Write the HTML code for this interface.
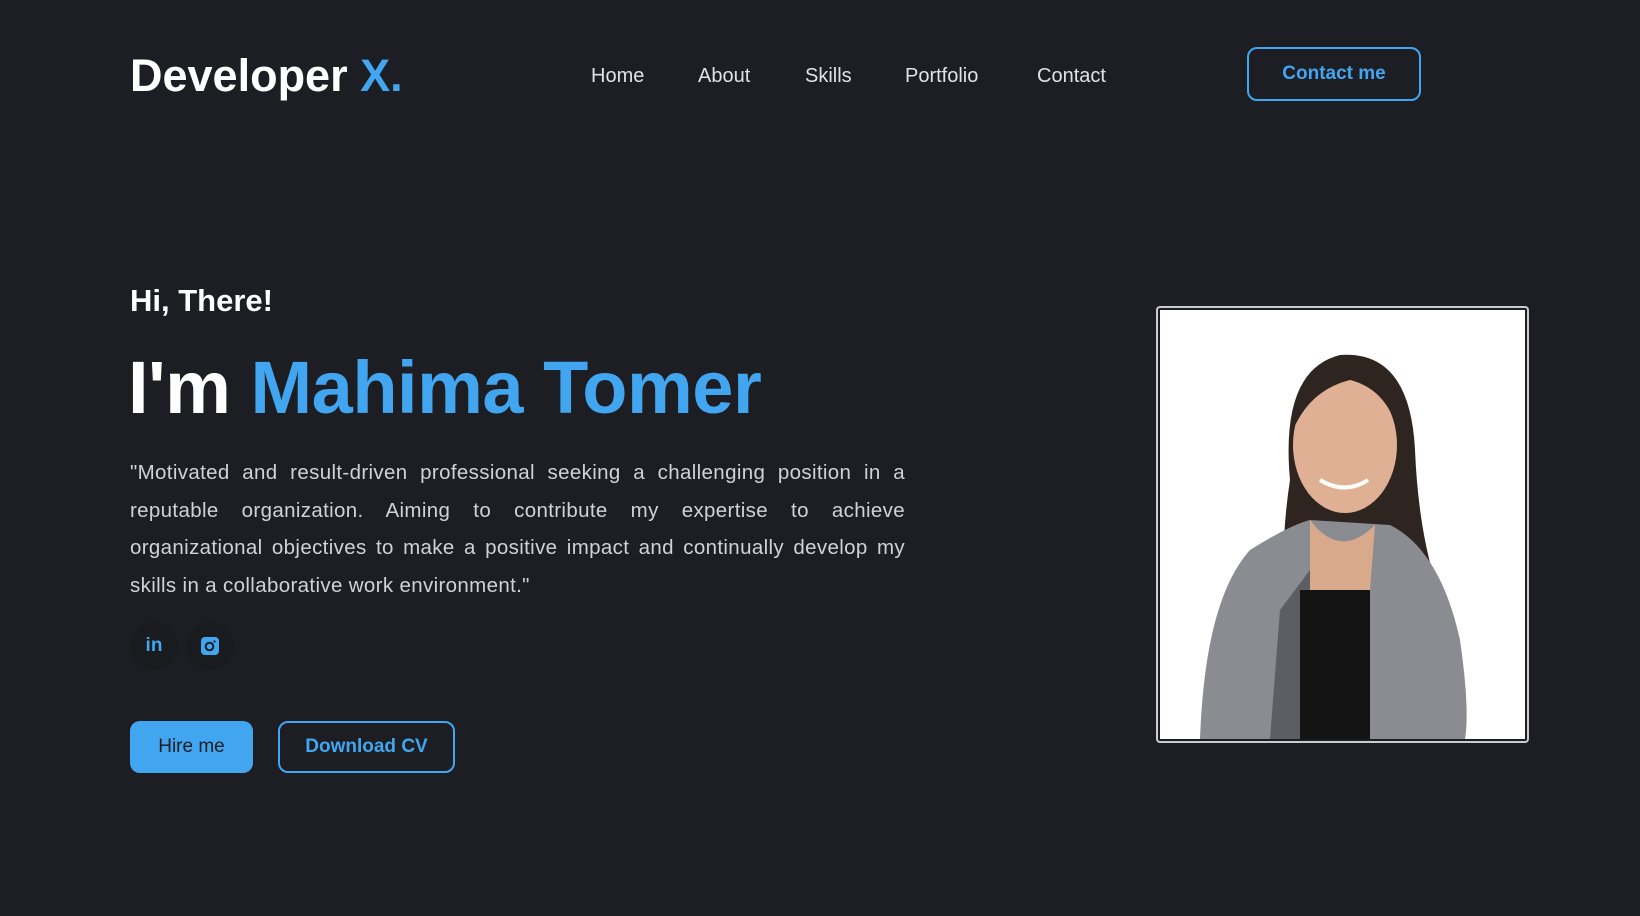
<!DOCTYPE html>
<html><head><meta charset="utf-8"><style>
*{margin:0;padding:0;box-sizing:border-box}
body{width:1640px;height:916px;background:#1c1e23;font-family:"Liberation Sans",sans-serif;color:#fff;position:relative;overflow:hidden}
.abs{position:absolute}
.logo{left:130px;top:50px;font-size:45px;font-weight:700;letter-spacing:0px}
.logo span{color:#42a5f0}
.nav{top:65px;font-size:20px;color:#dfe2e6}
.btn{border:2px solid #42a5f0;border-radius:10px;color:#42a5f0;font-weight:700;font-size:19px;display:flex;align-items:center;justify-content:center}
.hi{left:130px;top:283px;font-size:31px;font-weight:700}
.name{left:128px;top:345px;font-size:74px;font-weight:800;letter-spacing:-0.5px}
.name span{color:#42a5f0}
.p{left:130px;top:454px;width:775px;font-size:20.5px;letter-spacing:0.35px;line-height:37.5px;color:#cfd2d6;text-align:justify;text-align-last:left}
.ic{width:48px;height:48px;border-radius:50%;background:#191b1f;top:622px;display:flex;align-items:center;justify-content:center}
</style></head><body>
<div class="abs logo">Developer <span>X.</span></div>
<div class="abs nav" style="left:591px">Home</div>
<div class="abs nav" style="left:698px">About</div>
<div class="abs nav" style="left:805px">Skills</div>
<div class="abs nav" style="left:905px">Portfolio</div>
<div class="abs nav" style="left:1037px">Contact</div>
<div class="abs btn" style="left:1247px;top:47px;width:174px;height:54px">Contact me</div>
<div class="abs hi">Hi, There!</div>
<div class="abs name">I'm <span>Mahima Tomer</span></div>
<div class="abs p">"Motivated and result-driven professional seeking a challenging position in a reputable organization. Aiming to contribute my expertise to achieve organizational objectives to make a positive impact and continually develop my skills in a collaborative work environment."</div>
<div class="abs ic" style="left:130px"><span style="color:#42a5f0;font-weight:700;font-size:19px">in</span></div>
<div class="abs ic" style="left:186px"><svg width="18" height="18" viewBox="0 0 18 18"><rect x="0" y="0" width="18" height="18" rx="4" fill="#42a5f0"/><circle cx="8.5" cy="9.5" r="3.8" fill="none" stroke="#191b1f" stroke-width="2"/><circle cx="13.5" cy="4.5" r="1.1" fill="#191b1f"/></svg></div>
<div class="abs" style="left:130px;top:721px;width:123px;height:52px;background:#42a5f0;border-radius:10px;color:#1c1e23;font-size:19px;display:flex;align-items:center;justify-content:center">Hire me</div>
<div class="abs btn" style="left:278px;top:721px;width:177px;height:52px">Download CV</div>
<div class="abs" style="left:1156px;top:306px;width:373px;height:437px;border:2px solid #c9ccd2;border-radius:4px;padding:2px;background:#1c1e23">
<svg width="365" height="429" viewBox="0 0 365 429" style="display:block;background:#fff">
<path d="M130 170 Q120 60 180 45 Q250 40 255 140 Q260 260 300 330 L300 429 L150 429 Q110 300 130 170Z" fill="#2e2420"/>
<path d="M40 429 Q45 290 90 240 Q130 215 150 210 L230 215 Q280 240 300 330 Q310 400 305 429Z" fill="#8a8c92"/>
<path d="M110 429 L120 300 L150 260 L165 429Z" fill="#5c5e63"/>
<rect x="140" y="280" width="70" height="149" fill="#141414"/>
<path d="M150 210 Q180 250 215 215 L210 280 L150 280Z" fill="#d9a98c"/>
<ellipse cx="185" cy="135" rx="52" ry="68" fill="#dfb094"/>
<path d="M133 120 Q140 55 185 52 Q240 55 240 130 Q230 80 190 70 Q150 80 133 120Z" fill="#2e2420"/>
<path d="M160 170 Q185 185 208 170" stroke="#fff" stroke-width="4" fill="none"/>
</svg></div>
</body></html>
